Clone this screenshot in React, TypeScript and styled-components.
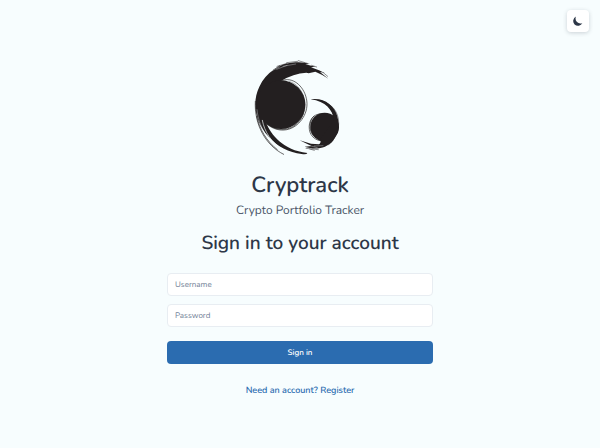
import React from "react";
import styled, { createGlobalStyle } from "styled-components";

const GlobalStyle = createGlobalStyle`
  *, *::before, *::after { box-sizing: border-box; }
  body {
    margin: 0;
    background: #f7fdfe;
    color: #2d3748;
    font-family: Nunito, Lato, "Open Sans", sans-serif;
    text-rendering: geometricPrecision;
  }
  button, input { font: inherit; text-rendering: inherit; }
`;

const Page = styled.div`
  min-height: 100vh;
  display: flex;
  flex-direction: column;
`;

const TopBar = styled.header`
  display: flex;
  justify-content: flex-end;
  padding: 10px 11px 0;
`;

const ThemeToggle = styled.button`
  display: grid;
  place-items: center;
  width: 22px;
  height: 22px;
  padding: 0;
  border: 0;
  border-radius: 4px;
  background: #fff;
  color: #2d3748;
  box-shadow: 0 1px 4px rgba(45, 55, 72, 0.22);
  cursor: pointer;
`;

const Main = styled.main`
  display: flex;
  flex-direction: column;
  align-items: center;
  width: 100%;
  max-width: 298px;
  margin: 0 auto;
  padding: 19px 16px 24px;
`;

const Title = styled.h1`
  margin: 8px 0 0;
  font-size: 22px;
  line-height: 32px;
  font-weight: 600;
`;

const Subtitle = styled.p`
  margin: 0;
  color: #4a5568;
  font-size: 12px;
  line-height: 20px;
`;

const Heading = styled.h2`
  margin: 8px 0 0;
  font-size: 19px;
  line-height: 28px;
  font-weight: 600;
  white-space: nowrap;
`;

const Form = styled.form`
  display: flex;
  flex-direction: column;
  gap: 8px;
  width: 100%;
  margin-top: 16px;
`;

const Field = styled.input`
  width: 100%;
  height: 23px;
  padding: 0 7px;
  border: 1px solid #e8edf2;
  border-radius: 4px;
  background: #fff;
  color: #2d3748;
  font-size: 8px;
  &::placeholder { color: #718096; opacity: 1; }
`;

const SubmitButton = styled.button`
  height: 23px;
  margin-top: 6px;
  padding: 0;
  border: 0;
  border-radius: 4px;
  background: #2b6cb0;
  color: #fff;
  font-size: 8px;
  font-weight: 600;
  cursor: pointer;
`;

const RegisterLink = styled.a`
  margin-top: 18px;
  color: #2b6cb0;
  font-size: 9px;
  font-weight: 600;
  line-height: 18px;
  text-decoration: none;
`;

const Logo = () => (
  <svg width="105" height="110" viewBox="9 0 315 330" role="img" aria-label="Cryptrack logo">
    <g fill="#231f20">
      <path d="M250 83Q231 70 211 62L191 67L184 65Q145 67 108 90L62 212C79 253 113 296 187 306Q186 311 170 309C132 305 96 286 72 258C30 215 20 153 43 107C63 65 103 36 151 34Q174 32 195 39L181 40L211 47L198 49L222 58L239 66L225 63Z" />
      <circle cx="108" cy="161" r="73" />
      <circle cx="239" cy="228" r="43" />
      <path d="M197 145C238 139 267 164 276 193C286 226 278 250 264 269C243 294 210 297 179 287L199 285L164 268L198 278L222 280Q229 276 226 265L267 206C262 177 243 151 197 145Z" />
    </g>
    <g fill="none" stroke="#231f20" strokeLinecap="round">
      <path d="M108 90C142 74 176 105 184 142C194 184 165 224 133 234C109 242 83 235 64 218" strokeWidth="2" />
      <path d="M132 91C164 98 184 138 180 171C177 195 162 216 146 224" strokeWidth="1" />
      <path d="M177 178C174 207 146 234 117 235C96 237 76 228 66 215" strokeWidth="2" />
      <path d="M31 151C27 222 63 284 116 310M35 196C44 235 64 270 97 296" strokeWidth="2" />
      <path d="M85 57L104 44M96 46L126 37M125 35L158 31M160 29L187 37M200 43L215 48M235 65L248 76" strokeWidth="1.5" />
      <path d="M229 188C202 189 190 211 193 235C196 259 217 273 240 269M207 195C188 213 194 245 207 256" strokeWidth="2" />
      <path d="M225 148C262 158 281 183 281 216C281 244 268 268 251 281M183 292L220 296M194 294L208 298" strokeWidth="1.5" />
    </g>
    <g fill="none" stroke="#f7fdfe" strokeLinecap="round">
      <path d="M52 208C58 242 80 276 112 294" strokeWidth="2" />
      <path d="M36 176C38 203 51 238 69 260M80 60L103 48M95 55L126 43M114 46L152 39" strokeWidth="1" />
      <path d="M208 285L234 284M190 283L217 290" strokeWidth="1" />
    </g>
  </svg>
);

const Moon = () => (
  <svg width="12" height="12" viewBox="0 0 20 20" fill="currentColor" aria-hidden="true">
    <path d="M17.293 13.293A8 8 0 0 1 6.707 2.707a8.001 8.001 0 1 0 10.586 10.586z" />
  </svg>
);

export default function App() {
  return (
    <Page>
      <GlobalStyle />
      <TopBar>
        <ThemeToggle type="button" aria-label="Toggle dark mode"><Moon /></ThemeToggle>
      </TopBar>
      <Main>
        <Logo />
        <Title>Cryptrack</Title>
        <Subtitle>Crypto Portfolio Tracker</Subtitle>
        <Heading>Sign in to your account</Heading>
        <Form onSubmit={(event) => event.preventDefault()}>
          <Field type="text" name="username" placeholder="Username" aria-label="Username" autoComplete="username" />
          <Field type="password" name="password" placeholder="Password" aria-label="Password" autoComplete="current-password" />
          <SubmitButton type="submit">Sign in</SubmitButton>
        </Form>
        <RegisterLink href="#register">Need an account? Register</RegisterLink>
      </Main>
    </Page>
  );
}
